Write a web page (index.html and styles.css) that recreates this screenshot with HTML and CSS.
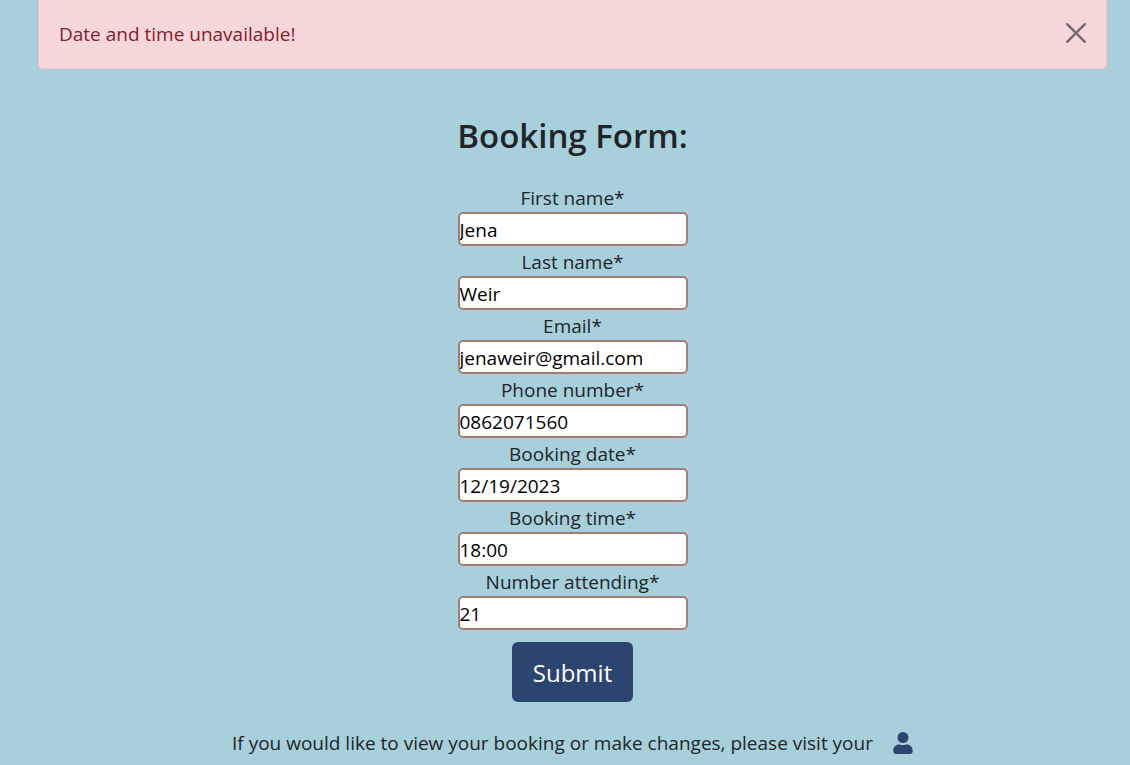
FILE: index.html
```html
<!DOCTYPE html>
<html lang="en">
<head>
<meta charset="utf-8">
<meta name="viewport" content="width=device-width, initial-scale=1">
<title>Booking Form</title>
<link rel="stylesheet" href="styles.css">
</head>
<body>
<main class="page">
  <div class="alert" role="alert">
    <span>Date and time unavailable!</span>
    <button class="alert-close" type="button" aria-label="Close">
      <svg class="close-icon" viewBox="0 0 16 16" aria-hidden="true"><path d="M.293.293a1 1 0 0 1 1.414 0L8 6.586 14.293.293a1 1 0 1 1 1.414 1.414L9.414 8l6.293 6.293a1 1 0 0 1-1.414 1.414L8 9.414l-6.293 6.293a1 1 0 0 1-1.414-1.414L6.586 8 .293 1.707a1 1 0 0 1 0-1.414z"/></svg>
    </button>
  </div>
  <h1 class="title">Booking Form:</h1>
  <form class="booking-form">
    <label class="label" for="first-name">First name*</label>
    <input class="field" id="first-name" type="text" value="Jena">
    <label class="label" for="last-name">Last name*</label>
    <input class="field" id="last-name" type="text" value="Weir">
    <label class="label" for="email">Email*</label>
    <input class="field" id="email" type="email" value="jenaweir@gmail.com">
    <label class="label" for="phone">Phone number*</label>
    <input class="field" id="phone" type="text" value="0862071560">
    <label class="label" for="date">Booking date*</label>
    <input class="field" id="date" type="text" value="12/19/2023">
    <label class="label" for="time">Booking time*</label>
    <input class="field" id="time" type="text" value="18:00">
    <label class="label" for="attending">Number attending*</label>
    <input class="field" id="attending" type="text" value="21">
    <button class="submit" type="submit">Submit</button>
  </form>
  <p class="note">
    <span>If you would like to view your booking or make changes, please visit your</span>
    <a class="profile-link" href="#" aria-label="Profile">
      <svg class="profile-icon" viewBox="0 0 448 512" aria-hidden="true"><path d="M224 256a128 128 0 1 0 0-256 128 128 0 1 0 0 256zM134 288C60 288 0 348 0 422v32c0 32 26 58 58 58h332c32 0 58-26 58-58v-32c0-74-60-134-134-134h-17c-22 10-47 16-73 16s-51-6-73-16z"/></svg>
    </a>
  </p>
</main>
</body>
</html>
```
FILE: styles.css
```css
* {
  box-sizing: border-box;
}

body {
  margin: 0;
  background: #a8d0da;
  color: #212529;
  font-family: "Segoe UI", "Open Sans", "Noto Sans", sans-serif;
  font-size: 19px;
  line-height: 30px;
}

.page {
  padding: 0 23px 0 38px;
}

.alert {
  display: flex;
  justify-content: space-between;
  align-items: flex-start;
  padding: 19px 20px;
  border: 1px solid #f5c2c7;
  border-top: 0;
  border-radius: 0 0 5px 5px;
  background: #f8d7da;
  color: #842029;
}

.alert-close {
  display: flex;
  margin-top: 4px;
  padding: 0;
  border: 0;
  background: none;
  opacity: 0.5;
}

.close-icon {
  width: 20px;
  height: 20px;
}

.title {
  margin: 45px 0 24px;
  font-size: 33px;
  font-weight: 600;
  line-height: 44px;
  text-align: center;
}

.booking-form {
  display: flex;
  flex-direction: column;
  align-items: center;
}

.label {
  padding-top: 2px;
  line-height: 28px;
}

.field {
  width: 230px;
  height: 34px;
  padding: 2px 0 0;
  border: 2px solid #a67c78;
  border-radius: 5px;
  background: #fff;
  color: #000;
  font: inherit;
}

.submit {
  margin-top: 12px;
  padding: 13px 21px 11px;
  border: 0;
  border-radius: 6px;
  background: #2c4470;
  color: #fff;
  font-family: inherit;
  font-size: 24px;
  line-height: 36px;
}

.note {
  display: flex;
  justify-content: center;
  align-items: center;
  gap: 20px;
  margin: 26px 0 0;
}

.profile-link {
  display: flex;
  color: #2c4470;
}

.profile-icon {
  width: 20px;
  height: 22px;
  fill: currentColor;
}
```
